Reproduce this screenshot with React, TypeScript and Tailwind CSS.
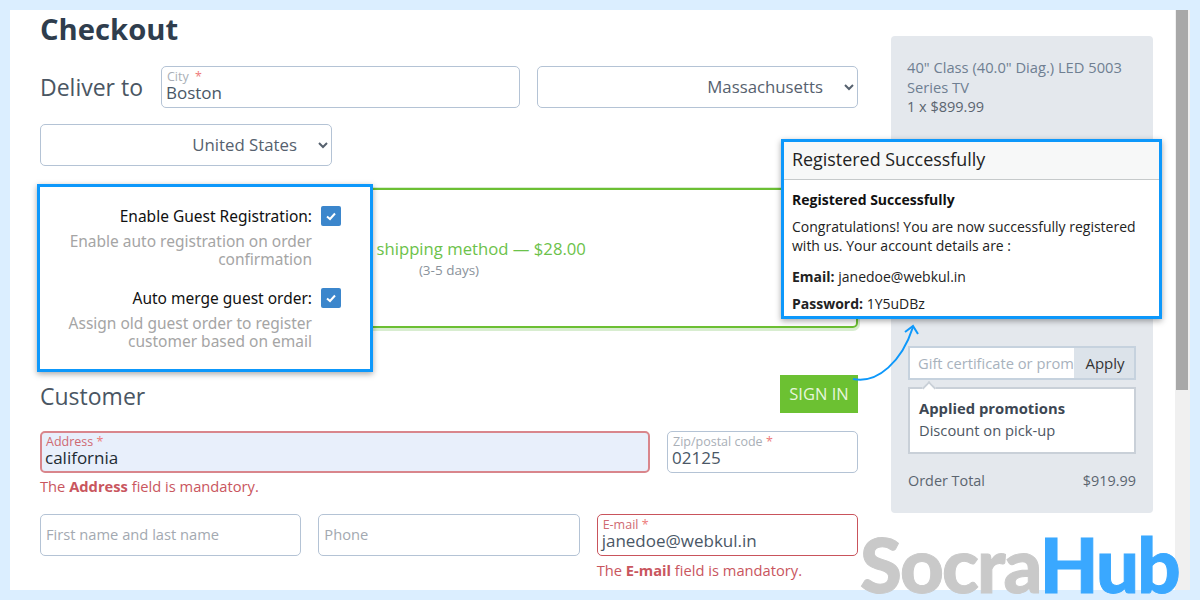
const Field = ({ label, value, className = "", tone = "normal", wideStar = false }: { label: string; value: string; className?: string; tone?: "normal" | "error" | "filled"; wideStar?: boolean }) => (
  <div
    className={`flex h-[42px] flex-col justify-center rounded-[5px] pb-[2px] pr-[5px] ${
      tone === "filled"
        ? "border-2 border-[#d9868c] bg-[#e8effb] pl-[3px]"
        : tone === "error"
          ? "border border-[#c9545c] bg-white pl-[4px]"
          : "border border-[#b4c3d5] bg-white pl-[4px]"
    } ${className}`}
  >
    <div className={`pl-[1px] text-[12.5px] leading-[13px] ${tone === "normal" ? "text-[#a9afb7]" : "text-[#cf6a72]"}`}>
      {label} <span className={`text-[#ee7b7b] ${wideStar ? "ml-[3px]" : ""}`}>*</span>
    </div>
    <div className={`text-[17px] leading-[20px] ${tone === "filled" ? "text-[#222b33]" : "text-[#4a5766]"}`}>{value}</div>
  </div>
);

const Placeholder = ({ text }: { text: string }) => (
  <div className="flex h-[42px] items-center rounded-[5px] border border-[#b4c3d5] bg-white px-[5px] pb-[2px] text-[14.7px] text-[#a3a9b1]">
    {text}
  </div>
);

const Check = () => (
  <div className="flex h-[20px] w-[20px] shrink-0 items-center justify-center rounded-[2px] bg-[#3b86cc]">
    <svg viewBox="0 0 12 12" className="h-[12px] w-[12px]" fill="none" stroke="white" strokeWidth="2">
      <path d="M2 6.5 L5 9 L10 3.5" />
    </svg>
  </div>
);

const Mandatory = ({ name }: { name: string }) => (
  <p className="text-[14.7px] leading-[20px] text-[#c9565e]">
    The <b>{name}</b> field is mandatory.
  </p>
);

const GuestOption = ({ title, lines }: { title: string; lines: string[] }) => (
  <div>
    <div className="flex items-center justify-end gap-[9px]">
      <span className="text-[15.5px] leading-[22px] text-[#111]">{title}</span>
      <Check />
    </div>
    <div className="mt-[5px] pr-[29px] text-right text-[15.5px] leading-[18px] text-[#a5a5a5]">
      {lines.map((l) => (
        <div key={l}>{l}</div>
      ))}
    </div>
  </div>
);

export default function App() {
  return (
    <div className="relative h-[600px] w-[1200px] overflow-hidden bg-[#dbeeff] p-[10px] font-['Open_Sans',sans-serif]">
      <div className="relative flex h-[580px] overflow-hidden bg-white">
        {/* Main column */}
        <main className="ml-[30px] w-[818px] shrink-0">
          <h1 className="h-[38px] text-[29.2px] font-bold leading-[38px] text-[#2f3d4d]">Checkout</h1>
          <div className="mt-[18px] flex items-center">
            <span className="w-[121px] text-[23px] text-[#4a5663]">Deliver to</span>
            <Field label="City" value="Boston" className="w-[359px]" wideStar />
            <select
              defaultValue="MA"
              className="ml-[17px] h-[42px] w-[321px] rounded-[5px] border border-[#b4c3d5] bg-white pb-[2px] pr-[18px] text-[16.8px] text-[#56616e] [text-align-last:right]"
            >
              <option value="MA">Massachusetts</option>
            </select>
          </div>
          <select
            defaultValue="US"
            className="mt-[16px] block h-[42px] w-[292px] rounded-[5px] border border-[#b4c3d5] bg-white pb-[2px] pr-[18px] text-[16.8px] text-[#56616e] [text-align-last:right]"
          >
            <option value="US">United States</option>
          </select>

          {/* Shipping method */}
          <div className="mt-[22px] flex h-[140px] flex-col items-center justify-center rounded-[5px] border-2 border-[#6cbf33] shadow-[0_1px_0_2px_#d8edd0]">
            <div className="text-[16.7px] leading-[24px] text-[#6cc24a]">Custom shipping method — $28.00</div>
            <div className="text-[13.5px] leading-[18px] text-[#8a929b]">(3-5 days)</div>
          </div>

          <div className="mt-[47px] flex h-[38px] items-center justify-between">
            <h2 className="pt-[4px] text-[23px] text-[#4a5663]">Customer</h2>
            <button className="h-[38px] w-[78px] bg-[#6cc132] text-[16.5px] text-[#e6f6dc]">SIGN IN</button>
          </div>

          <div className="mt-[18px] flex gap-[17px]">
            <div className="w-[610px]">
              <Field label="Address" value="california" tone="filled" />
              <div className="mt-[3px]">
                <Mandatory name="Address" />
              </div>
            </div>
            <div className="w-[191px]">
              <Field label="Zip/postal code" value="02125" />
            </div>
          </div>

          <div className="mt-[18px] grid grid-cols-3 gap-[17px]">
            <Placeholder text="First name and last name" />
            <Placeholder text="Phone" />
            <div>
              <Field label="E-mail" value="janedoe@webkul.in" tone="error" />
              <div className="mt-[4px]">
                <Mandatory name="E-mail" />
              </div>
            </div>
          </div>
        </main>

        {/* Order summary */}
        <aside className="ml-[33px] mt-[26px] h-[477px] w-[262px] shrink-0 rounded-[4px] bg-[#e4e8ed] px-[16px] pt-[21px]">
          <div className="text-[14.7px] leading-[20px] text-[#6f7f92]">40" Class (40.0" Diag.) LED 5003 Series TV</div>
          <div className="text-[14.5px] leading-[20px] text-[#5b6570]">1 x $899.99</div>
          <div className="mx-[1px] mt-[229px] flex h-[34px] border-2 border-[#c6d2de]">
            <div className="flex-1 overflow-hidden whitespace-nowrap bg-white pl-[8px] text-[14.7px] leading-[30px] text-[#a8b2bd]">
              Gift certificate or promo code
            </div>
            <div className="w-[60px] bg-[#dce3ea] pl-[2px] text-center text-[15px] leading-[30px] text-[#333]">Apply</div>
          </div>
          <div className="relative mx-[1px] mt-[7px] h-[67px] border-2 border-[#c9d0d8] bg-white px-[9px] py-[8px]">
            <div className="absolute -top-[6px] left-[14px] h-[10px] w-[10px] rotate-45 border-l-2 border-t-2 border-[#c9d0d8] bg-white" />
            <div className="text-[14.8px] font-bold leading-[22px] text-[#3d4753]">Applied promotions</div>
            <div className="text-[14.7px] leading-[22px] text-[#4d5763]">Discount on pick-up</div>
          </div>
          <div className="mx-[1px] mt-[17px] flex justify-between text-[14.4px] leading-[20px] text-[#5b6570]">
            <span>Order Total</span>
            <span>$919.99</span>
          </div>
        </aside>

        {/* Scrollbar */}
        <div className="ml-[22px] w-[15px] shrink-0 bg-[#f0f0f0] pl-[1px]">
          <div className="h-[380px] w-[12px] bg-[#a8a8a8]" />
        </div>

        {/* Callout: guest options */}
        <div className="absolute left-[27px] top-[174px] flex h-[188px] w-[336px] flex-col gap-[19px] border-[3px] border-[#0d98fb] bg-white pl-[20px] pr-[29px] pt-[18px] shadow-[0_2px_6px_rgba(0,0,0,0.35)] font-['Noto_Sans',sans-serif]">
          <GuestOption title="Enable Guest Registration:" lines={["Enable auto registration on order", "confirmation"]} />
          <GuestOption title="Auto merge guest order:" lines={["Assign old guest order to register", "customer based on email"]} />
        </div>

        {/* Callout: registered */}
        <div className="absolute left-[771px] top-[129px] h-[180px] w-[381px] border-[3px] border-[#0d98fb] bg-white shadow-[0_2px_6px_rgba(0,0,0,0.35)]">
          <div className="h-[38px] border-b border-[#c6cacb] bg-[#f7f8f8] px-[8px] text-[17.9px] leading-[35px] text-[#222]">
            Registered Successfully
          </div>
          <div className="px-[8px] pt-[9px] text-[14px] text-[#222]">
            <div className="font-bold leading-[22px] text-[#111]">Registered Successfully</div>
            <p className="mt-[6px] leading-[19px]">
              Congratulations! You are now successfully registered with us. Your account details are :
            </p>
            <p className="mt-[12px] leading-[19px]">
              <b>Email:</b> janedoe@webkul.in
            </p>
            <p className="mt-[8px] leading-[19px]">
              <b>Password:</b> 1Y5uDBz
            </p>
          </div>
        </div>

        {/* Connector arrow */}
        <svg className="absolute left-[830px] top-[305px] h-[80px] w-[100px]" viewBox="0 0 100 80" fill="none" stroke="#0d98fb" strokeWidth="2">
          <path d="M13 64 C 38 69, 62 46, 73 12" />
          <path d="M65 17 L 73 11 L 78 19" />
        </svg>
      </div>

      {/* Watermark */}
      <div className="absolute left-[860px] top-[514px] whitespace-nowrap font-['Lato',sans-serif] text-[76px] font-black leading-[100px] tracking-[-1.8px]">
        <span className="text-[#c9c9c9] [-webkit-text-stroke:1px_#c9c9c9]">Socra</span>
        <span className="text-[#3aa8ff] [-webkit-text-stroke:1px_#3aa8ff]">Hub</span>
      </div>
    </div>
  );
}
